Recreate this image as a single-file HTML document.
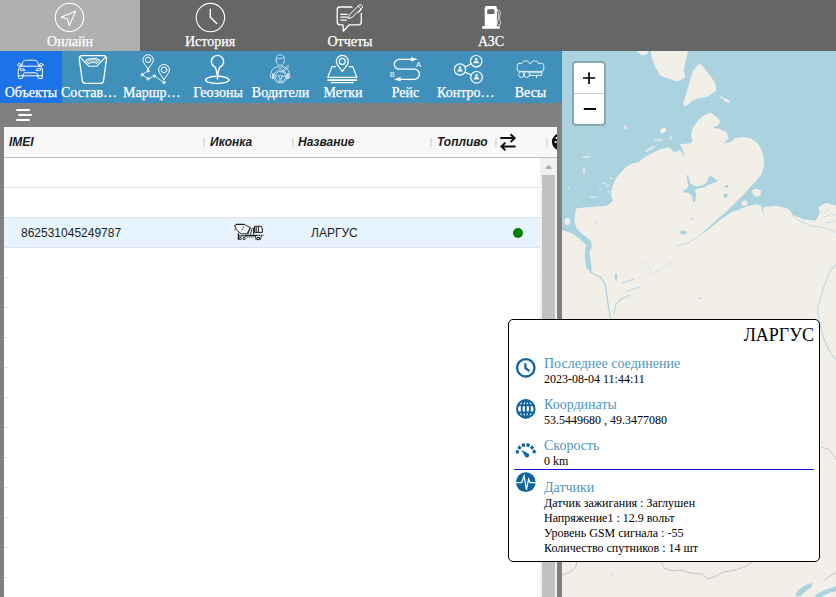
<!DOCTYPE html>
<html><head><meta charset="utf-8">
<style>
*{box-sizing:border-box}
html,body{margin:0;padding:0}
body{width:836px;height:597px;overflow:hidden;position:relative;background:#808080;font-family:"Liberation Serif",serif;}
#top{position:absolute;left:0;top:0;width:836px;height:51px;background:#666666}
.tab{position:absolute;top:0;height:51px;width:140px;-webkit-text-stroke:0.25px #fff;color:#fff;text-align:center;font-size:14px}
.tab.act{background:#b0b0b0}
.tab span{position:absolute;left:0;right:0;top:34px;line-height:16px}
.tab svg{position:absolute;left:50%;top:3px;margin-left:-15px}
#blue{position:absolute;left:0;top:51px;width:562px;height:52px;background:#4090bc}
.it{position:absolute;top:0;height:52px;-webkit-text-stroke:0.25px #fff;color:#fff;font-size:14px;text-align:center;white-space:nowrap}
.it.act{background:#1c73e8}
.it span{position:absolute;left:0;right:0;top:34px;line-height:16px}
.it svg{position:absolute;left:50%;top:3px;margin-left:-16px}
#strip{position:absolute;left:0;top:103px;width:562px;height:24px;background:#808080}
#grid{position:absolute;left:4px;top:127px;width:553px;height:470px;background:#fff;font-family:"Liberation Sans",sans-serif}
#ghead{position:absolute;left:0;top:0;width:553px;height:31px;background:#f8f8f8;border-bottom:1px solid #babfc7}
.h{position:absolute;top:0;line-height:30px;font-size:12px;font-weight:bold;font-style:italic;color:#181d1f}
.sep{position:absolute;top:11px;width:2px;height:9px;background:#dde0ea}
.row{position:absolute;left:0;width:536px;height:30px;border-bottom:1px solid #dde2eb}
.row.sel{background:#e8f4fd}
.c{position:absolute;top:1px;line-height:29px;font-size:12px;color:#181d1f}
#sb{position:absolute;left:536px;top:31px;width:17px;height:439px;background:#f1f1f1}
#sbt{position:absolute;left:2px;top:17px;width:13px;height:422px;background:#c1c1c1}
#split{position:absolute;left:557px;top:102px;width:5px;height:495px;background:#808080}
#map{position:absolute;left:562px;top:51px;width:274px;height:546px;background:#aad3df;overflow:hidden}
#zoom{position:absolute;left:572px;top:61px;width:34px;height:65px;border:2px solid rgba(0,0,0,0.2);border-radius:4px;background:#fff;background-clip:padding-box}
#zoom svg{position:absolute;left:0;top:0}
#pop{position:absolute;left:508px;top:319px;width:312px;height:243px;background:#fff;border:1px solid #000;border-radius:5px;color:#000}
#pop .ttl{position:absolute;right:5px;top:5px;font-size:18px;line-height:21px}
#pop .lb{position:absolute;left:35px;font-size:14px;color:#5096bf;line-height:16px}
#pop .v{position:absolute;left:35px;font-size:12px;line-height:15px}
#pop .ln{position:absolute;left:5px;top:149px;width:300px;height:1px;background:#1212e6}
#pop svg{position:absolute;left:0;top:0}
</style></head><body>
<div id="top">
 <div class="tab act" style="left:0"><span>Онлайн</span></div>
 <div class="tab" style="left:140px"><span>История</span></div>
 <div class="tab" style="left:280px"><span>Отчеты</span></div>
 <div class="tab" style="left:421px"><span>АЗС</span></div>
</div>
<div id="blue">
 <div class="it act" style="left:0;width:62px"><span>Объекты</span></div>
 <div class="it" style="left:62px;width:62px"><span style="text-align:left;left:-1px">Состав…</span></div>
 <div class="it" style="left:124px;width:63px"><span style="text-align:left;left:-1px">Маршр…</span></div>
 <div class="it" style="left:187px;width:62px"><span>Геозоны</span></div>
 <div class="it" style="left:249px;width:63px"><span>Водители</span></div>
 <div class="it" style="left:312px;width:62px"><span>Метки</span></div>
 <div class="it" style="left:374px;width:63px"><span>Рейс</span></div>
 <div class="it" style="left:437px;width:62px"><span style="text-align:left;left:0px">Контро…</span></div>
 <div class="it" style="left:499px;width:63px"><span>Весы</span></div>
</div>
<div id="strip"></div>

<svg id="ico" width="836" height="130" viewBox="0 0 836 130" style="position:absolute;left:0;top:0" fill="none" stroke="#fff" stroke-width="1.1" stroke-linecap="round" stroke-linejoin="round">
<!-- online -->
<circle cx="69.5" cy="17.4" r="14.2"/>
<path d="M75.7 11.1 L61.2 17.2 L67.6 19 L69.3 25.8 Z"/>
<!-- history -->
<circle cx="210.4" cy="17.6" r="14.2"/>
<path d="M210.3 9.3 V17.2 L216.7 23.5" stroke-width="1.4"/>
<!-- reports -->
<path d="M352 7 H340 a2.8 2.8 0 0 0 -2.8 2.8 V22 a2.8 2.8 0 0 0 2.8 2.8 H343 L343.3 31.2 L349.2 24.8 H358.5 a2.8 2.8 0 0 0 2.8 -2.8 V13.5" stroke-width="1.3"/>
<path d="M340.8 14.4 H347.3 M340.8 17.2 H347.3 M340.8 20.1 H346.3" stroke-width="1.3"/>
<path d="M348.4 18.3 L349.6 14.6 L360.2 4.2 L363 6.9 L352.2 17.2 Z M358.3 6.1 L361 8.8 M361.5 9.5 L358.5 12.6" stroke-width="1"/>
<!-- azs -->
<path d="M484.7 26.2 V8.1 a2 2 0 0 1 2 -2 H494.9 a2 2 0 0 1 2 2 V26.2 Z M482.2 26.2 H499.8 V28.7 H482.2 Z" fill="#fff" stroke="none"/>
<rect x="487.2" y="9.3" width="7.2" height="4.7" rx="0.8" fill="#666" stroke="none"/>
<path d="M497 10 C499.5 9.5 500.5 11.5 500.3 13.5 C500 16 499.2 17 499.5 19 C500 21 501 22 500.5 24 C500 25.5 498 25.5 497.6 23.5 C497.3 21 498.6 19 498.6 16 C498.6 13.5 498.2 11.5 497 10 Z" stroke-width="0.7"/>
<!-- car -->
<g stroke-width="1">
<path d="M21.6 66.2 L22.6 62.6 C23.2 60.6 24.5 60.2 30.3 60.2 C36.1 60.2 37.4 60.6 38 62.6 L39 66.2"/>
<path d="M21 66.2 H39.6"/>
<ellipse cx="19.4" cy="64.8" rx="1.7" ry="1.3"/><ellipse cx="41.3" cy="64.8" rx="1.7" ry="1.3"/>
<path d="M21 66.2 C19 66.8 18.3 68 18.3 70 V77.2 a1.4 1.4 0 0 0 1.4 1.4 H21.4 a1.4 1.4 0 0 0 1.4 -1.4 V76 M39.6 66.2 C41.6 66.8 42.4 68 42.4 70 V77.2 a1.4 1.4 0 0 1 -1.4 1.4 H39.3 a1.4 1.4 0 0 1 -1.4 -1.4 V76"/>
<path d="M18.5 75.8 H42.2"/>
<path d="M22.8 76 L23.6 73.6 C23.8 73 24.2 72.8 25 72.8 H35.7 C36.5 72.8 36.9 73 37.1 73.6 L37.9 76"/>
<path d="M20.4 68.5 C22 68.3 24 68.8 25 70.3 C23.5 70.8 21.5 70.8 20.4 70.3 Z M40.3 68.5 C38.7 68.3 36.7 68.8 35.7 70.3 C37.2 70.8 39.2 70.8 40.3 70.3 Z"/>
</g>
<!-- scales -->
<g stroke-width="1.3">
<path d="M82 55.6 H103.8 a2.7 2.7 0 0 1 2.7 3 L103.6 80.5 a3 3 0 0 1 -3 2.8 H85.3 a3 3 0 0 1 -3 -2.8 L79.2 58.6 a2.7 2.7 0 0 1 2.8 -3 Z"/>
<path d="M80 57 L88.7 66.2 H96.9 L105.6 57" stroke-width="1.1"/>
<path d="M85.7 60.4 C88 57.6 98 57.6 100 60.4 L97 63.4 C95.5 62.2 90.5 62.2 89 63.4 Z" stroke-width="1" fill="rgba(255,255,255,0.3)"/><path d="M88.6 59.6 L89.2 60.8 M90.8 58.9 L91.1 60.2 M92.9 58.6 V59.9 M95 58.9 L94.7 60.2 M97.2 59.6 L96.6 60.8" stroke-width="0.7"/>
</g>
<!-- route -->
<g stroke-width="1">
<path d="M148.1 69.3 C146 65.5 142.9 63 142.9 59.9 a5.2 5.2 0 0 1 10.4 0 C153.3 63 150.2 65.5 148.1 69.3 Z"/>
<circle cx="148.1" cy="59.9" r="2.7"/>
<path d="M164 79.6 C161.8 75.6 158.6 73 158.6 69.9 a5.4 5.4 0 0 1 10.8 0 C169.4 73 166.2 75.6 164 79.6 Z"/>
<circle cx="164" cy="69.9" r="2.8"/>
<path d="M148.1 71 L142.2 74.7 L148.1 78.8 L154.4 75.9 L164 82.5" stroke-width="0.8"/>
<circle cx="148.1" cy="71" r="1.1"/><circle cx="142.2" cy="74.7" r="1.2"/><circle cx="148.1" cy="78.8" r="1.2"/><circle cx="154.4" cy="75.9" r="1.2"/><circle cx="164" cy="82.5" r="1.2"/>
</g>
<!-- geozone -->
<g stroke-width="1.4">
<path d="M217.5 79 C217.2 73 216.8 69.5 215 67.2 a6.2 6.2 0 1 1 5 0 C218.2 69.5 217.8 73 217.5 79 Z"/>
<ellipse cx="217.3" cy="79.9" rx="11.7" ry="3.6"/>
</g>
<!-- driver -->
<g stroke-width="0.7" opacity="0.92">
<path d="M276.2 60.5 C275.6 56.5 277.5 54.8 280.2 54.8 C283 54.8 284.8 56.5 284.3 60.5 C284.2 62.5 283.3 64.5 281.8 65.2 H278.6 C277.2 64.5 276.3 62.5 276.2 60.5 Z"/>
<path d="M276.6 58.4 C278.5 59.4 282 59 283.8 57.4"/>
<path d="M278.6 65.2 L278.4 66.6 C275 67.5 272.6 68.3 271.8 70.5 L270.3 76 C270.2 77.5 271.5 78.5 273 78.3 M281.8 65.2 L282 66.6 C285.4 67.5 287.8 68.3 288.6 70.5 L290.1 76 C290.2 77.5 288.9 78.5 287.4 78.3"/>
<path d="M278.4 66.6 L280.2 69 L282 66.6"/>
<path d="M288.2 65.2 L281 72.2 M289 66.5 L282.2 73"/>
<circle cx="280.5" cy="76.6" r="6.6"/>
<circle cx="280.5" cy="76.6" r="5.2"/>
<circle cx="280.5" cy="76.7" r="1.7"/>
<path d="M275.3 76 H278.8 M282.2 76 H285.7 M279.8 78.3 V81.6 M281.2 78.3 V81.6"/>
<path d="M273 74 v4 M288 74 v4" stroke-width="1.6"/>
</g>
<!-- marks -->
<g stroke-width="1.2">
<path d="M342.3 71.6 C340 67.3 336.3 65 336.3 61.4 a6 6 0 0 1 12 0 C348.3 65 344.6 67.3 342.3 71.6 Z"/>
<circle cx="342.3" cy="61.4" r="3"/>
<path d="M335.7 66.6 H332 L327.8 77.3 H356.8 L352.7 66.6 H349.1"/>
<path d="M328 80.1 H356.5" stroke-width="1.7"/>
<path d="M331 82.6 H353.3" stroke-width="1.2"/>
</g>
<!-- reis -->
<g stroke-width="1.3">
<path d="M413 59.3 H399.2 a4.95 4.95 0 0 0 0 9.9 H414.4 a5.05 5.05 0 0 1 0 10.1 H398"/>
<path d="M411 57 L417.6 59.3 L411 61.6 Z M400.6 77 L394 79.3 L400.6 81.6 Z" fill="#fff" stroke="none"/>
</g>
<text x="416" y="67.3" font-family="Liberation Sans, sans-serif" font-size="7.6" fill="#fff" stroke="none">A</text>
<text x="389.8" y="76.7" font-family="Liberation Sans, sans-serif" font-size="7.6" fill="#fff" stroke="none">B</text>
<!-- control -->
<g stroke-width="1.2">
<circle cx="460" cy="69.5" r="5.6"/><circle cx="476.2" cy="61.2" r="5.7"/><circle cx="476.5" cy="77.3" r="5.8"/>
<path d="M465.2 67 L471.2 63.8 M465.2 72.2 L471.4 75"/>
<g fill="#fff" stroke="none">
<circle cx="460" cy="67.6" r="1.3"/><path d="M457.2 71.6 L458.3 69.3 H461.7 L462.8 71.6 Z"/>
<circle cx="476.2" cy="59.3" r="1.3"/><path d="M473.4 63.3 L474.5 61 H477.9 L479 63.3 Z"/>
<circle cx="476.5" cy="75.4" r="1.3"/><path d="M473.7 79.4 L474.8 77.1 H478.2 L479.3 79.4 Z"/>
</g></g>
<!-- vesy tanker -->
<g stroke-width="0.9" opacity="0.95">
<path d="M519.5 63.3 H522.3 C522.9 61.6 523.5 61 524.8 61 H526.8 C528.1 61 528.7 61.6 529.3 63.3 H531.2 C531.8 61.6 532.4 61 533.7 61 H535.7 C537 61 537.6 61.6 538.2 63.3 H541.5 a2.3 2.3 0 0 1 2.3 2.3 V69.1 a2.3 2.3 0 0 1 -2.3 2.3 H519.5 a2.3 2.3 0 0 1 -2.3 -2.3 V65.6 a2.3 2.3 0 0 1 2.3 -2.3 Z"/>
<circle cx="521.4" cy="74.6" r="2.9"/><circle cx="526.8" cy="74.6" r="2.9"/>
<path d="M529.8 72.8 H541.8 V75.5 H529.8 M536.5 75.5 V77.6 M541.8 71.4 V72.8"/>
</g>
<!-- hamburger -->
<path d="M16.3 110 H29.8 M18.3 115 H31.8 M16.3 120 H29.8" stroke-width="1.8" stroke-linecap="butt"/>
</svg>
<div id="grid">
 <div id="ghead">
  <div class="h" style="left:5px">IMEI</div>
  <div class="sep" style="left:199px"></div><div class="h" style="left:206px">Иконка</div>
  <div class="sep" style="left:288px"></div><div class="h" style="left:294px">Название</div>
  <div class="sep" style="left:426px"></div><div class="h" style="left:433px">Топливо</div>
  <div class="sep" style="left:491px"></div>
  <div class="sep" style="left:542px"></div>
 </div>
 <div class="row" style="top:31px"></div>
 <div class="row" style="top:61px"></div>
 <div class="row sel" style="top:91px">
  <div class="c" style="left:17px">862531045249787</div>
  <div class="c" style="left:307px">ЛАРГУС</div>
 </div>

 <div style="position:absolute;left:0;top:150px;width:3px;height:1px;background:#d5dae6"></div><div style="position:absolute;left:0;top:180px;width:3px;height:1px;background:#d5dae6"></div><div style="position:absolute;left:0;top:210px;width:3px;height:1px;background:#d5dae6"></div><div style="position:absolute;left:0;top:240px;width:3px;height:1px;background:#d5dae6"></div><div style="position:absolute;left:0;top:270px;width:3px;height:1px;background:#d5dae6"></div><div style="position:absolute;left:0;top:300px;width:3px;height:1px;background:#d5dae6"></div><div style="position:absolute;left:0;top:330px;width:3px;height:1px;background:#d5dae6"></div><div style="position:absolute;left:0;top:360px;width:3px;height:1px;background:#d5dae6"></div><div style="position:absolute;left:0;top:390px;width:3px;height:1px;background:#d5dae6"></div><div style="position:absolute;left:0;top:420px;width:3px;height:1px;background:#d5dae6"></div><div style="position:absolute;left:0;top:450px;width:3px;height:1px;background:#d5dae6"></div><div style="position:absolute;left:535px;top:150px;width:1px;height:1px;background:#d5dae6"></div><div style="position:absolute;left:535px;top:180px;width:1px;height:1px;background:#d5dae6"></div><div style="position:absolute;left:535px;top:210px;width:1px;height:1px;background:#d5dae6"></div><div style="position:absolute;left:535px;top:240px;width:1px;height:1px;background:#d5dae6"></div><div style="position:absolute;left:535px;top:270px;width:1px;height:1px;background:#d5dae6"></div><div style="position:absolute;left:535px;top:300px;width:1px;height:1px;background:#d5dae6"></div><div style="position:absolute;left:535px;top:330px;width:1px;height:1px;background:#d5dae6"></div><div style="position:absolute;left:535px;top:360px;width:1px;height:1px;background:#d5dae6"></div><div style="position:absolute;left:535px;top:390px;width:1px;height:1px;background:#d5dae6"></div><div style="position:absolute;left:535px;top:420px;width:1px;height:1px;background:#d5dae6"></div><div style="position:absolute;left:535px;top:450px;width:1px;height:1px;background:#d5dae6"></div>
 <div id="sb"><div id="sbt"></div></div>
 <svg width="553" height="470" viewBox="4 127 553 470" style="position:absolute;left:0;top:0;overflow:hidden">
  <g fill="none" stroke="#111" stroke-width="2" stroke-linecap="butt" stroke-linejoin="miter">
   <path d="M500.3 138.1 H515 M510.6 134.2 L514.6 138.1 L510.6 142"/>
   <path d="M515.6 146.5 H501 M505.4 142.6 L501.4 146.5 L505.4 150.4"/>
  </g>
  <circle cx="560.5" cy="141.8" r="8.6" fill="#111"/>
  <ellipse cx="556.5" cy="138" rx="0.9" ry="1" fill="#fff"/><ellipse cx="555.7" cy="142.1" rx="1.1" ry="1.1" fill="#fff"/>
  <path d="M545 168.8 L548.6 165 L552.2 168.8 Z" fill="#a3a3a3"/>
  <circle cx="518" cy="233" r="5" fill="#008000"/>
  <g fill="none" stroke="#1a1a1a" stroke-width="1" stroke-linejoin="round" stroke-linecap="butt">
   <path d="M234.8 225.8 L236.3 224.4 H244.2 L250.2 227.6 L247 233.8 H241 L236.2 229.6 L235.6 227.4 Z" fill="#f3f6f9" stroke-width="0.9"/>
   <path d="M235.9 224.4 H244.4" stroke-width="1.1"/>
   <path d="M234.4 225 L235.6 227.2 L234.6 230.4" stroke-dasharray="1.2 1" opacity="0.8"/>
   <path d="M243.6 226.6 L241.6 231.2" stroke-dasharray="1.3 1"/>
   <path d="M250.4 227.6 L247.8 234.4 M252.2 228.2 L250.4 234.6" stroke-width="0.9"/>
   <path d="M253.5 227.6 V234.8" stroke-width="0.9"/>
   <path d="M238.4 233.2 V239.8" stroke-width="1.3"/>
   <path d="M238.6 235.9 H246" stroke-width="1.1"/>
   <path d="M245 235.6 H256" stroke-width="1.6"/>
   <path d="M256 235.4 H263.6" stroke-dasharray="1.6 0.8" stroke-width="1.1"/>
   <circle cx="240.3" cy="238.6" r="1.1"/><circle cx="244.2" cy="238.6" r="1.1"/>
   <path d="M246.5 237.7 H254" stroke-dasharray="1 1.4" opacity="0.8"/>
   <path d="M254.6 226.3 H261.4 L262.3 229 V232.4 H254.6 Z" fill="#eef2f6" stroke-width="1"/>
   <path d="M256.2 227 V232 M258.4 227 V232" stroke-width="1"/>
   <path d="M254.4 235.8 C255.6 236.6 256 238 255.8 239.6 M260.6 239.6 C260.6 237.6 260.8 236.6 262 235.8" stroke-width="1"/>
   <circle cx="258.2" cy="238.5" r="1.3" stroke-width="1.1"/>
  </g>
 </svg>
</div>
<div id="split"></div>
<div id="map"><svg width="274" height="546" viewBox="562 51 274 546" style="position:absolute;left:0;top:0">
<rect x="562" y="51" width="274" height="546" fill="#aad3df"/>
<g fill="#f2efe9">
<!-- Severnaya Zemlya -->
<path d="M650.5 51 L652 58 L655.4 67.4 L660.4 75.6 L665 77.5 L670.2 78.9 L676.8 81.6 L681 80 L685 77.2 L684.2 72 L684 67.4 L685.5 62 L686.6 57.6 L688.2 51 Z"/>
<path d="M637 51 L648.5 51 L647 54.5 L641 55 Z"/>
<path d="M699.7 63.5 L696 67 L693.1 70.7 L690.5 79 L688.2 87.1 L685.5 96 L683.3 103.5 L684.5 106.3 L688.3 104.5 L693.1 100.2 L699 98.2 L706.3 96.9 L711.5 94.2 L716.1 90.3 L715.8 86 L714.5 82.1 L710.5 76 L706.3 70.7 L702.5 66 Z"/>
<ellipse cx="726.3" cy="100.5" rx="3.6" ry="1.5" transform="rotate(25 726.3 100.5)"/>
<ellipse cx="721.5" cy="97.5" rx="1.5" ry="1"/>
<ellipse cx="663.3" cy="130.4" rx="3.2" ry="2.2" transform="rotate(-35 663.3 130.4)"/>
<ellipse cx="658" cy="140" rx="5" ry="1.2" transform="rotate(-10 658 140)" opacity="0.6"/>
<ellipse cx="670.5" cy="138" rx="1.3" ry="2.6" opacity="0.6"/>
<ellipse cx="625.5" cy="127" rx="1.6" ry="2.6" opacity="0.7"/>
<ellipse cx="586" cy="157" rx="4" ry="1.2" opacity="0.6"/>
<ellipse cx="584" cy="170.5" rx="1.3" ry="3.2" opacity="0.7"/>
<ellipse cx="593" cy="197" rx="4" ry="1" opacity="0.6"/>
<ellipse cx="603.5" cy="183.3" rx="1.6" ry="1" opacity="0.7"/><ellipse cx="607.5" cy="185.5" rx="2" ry="1.5" opacity="0.6"/><ellipse cx="608.5" cy="191.5" rx="1.6" ry="1.6" opacity="0.6"/><ellipse cx="600" cy="189" rx="1.4" ry="1" opacity="0.6"/><ellipse cx="611" cy="178" rx="2" ry="1" opacity="0.6"/><ellipse cx="569" cy="187.5" rx="1" ry="1" opacity="0.7"/>
<ellipse cx="650" cy="149" rx="6" ry="1.3" transform="rotate(-25 650 149)" opacity="0.7"/>
<!-- mainland -->
<path d="M562 597 L562 230.5 L567 231.5 L571.6 233.5 L576 236 L580.4 239.3 L586.3 245.2 L585.2 250 L584.8 255.4 L585.5 262 L586.3 267.2 L590.7 273
 L591.6 268 L590.7 261.3 L589.2 252.5 L592.1 246.7 L590.7 240.8 L587 237.5 L583.4 234.9 L579 231 L576 227.6 L574.6 222 L574.6 217.4 L576 208.6 L584 207.6 L592.1 207.1 L606.8 205.7 L612.7 201.3 L611.5 196 L611.2 191 L614.1 182.2 L616.5 177.5 L620 173.4 L623.5 169.5 L627.3 166.1
 L633 163.6 L638 162.3 L646.1 156.3 L652.1 153.3 L660.2 149.3 L668.2 147.3 L671.5 149.8 L674.2 152.3 L680.3 150.3 L682.2 153 L683.4 157.5 L683.6 152 L682.7 149.3 L679.8 144.2 L685 143.8 L690.3 143.2 L692.3 141.6 L691.3 135.2 L691.8 131 L693.3 127.2 L698.3 120.1 L704.4 115.1 L710.4 112.7 L715.4 116.1 L720.5 121.1 L718.4 125.2 L712.4 127.2 L720.5 129.2 L726.5 132.2 L728.5 138.2 L723.5 143.2 L730.5 142.2 L734.5 138.2 L742.6 137.2 L750.6 138.2 L757.6 143.2 L760.5 148 L762.7 153.3 L764.3 163.3 L763.3 168.5 L761.7 173.4 L756.6 180.4 L750.6 186.5 L744.6 193.5 L738.5 199.5 L730.5 207.6 L724.5 213.6 L719 217.8 L710 226 L703 232 L704 233 L711 227.3 L722 218.6 L731 212.6 L740 209 L749.2 205.8 L755.2 204.3 L761.2 205.8 L762.7 212.5 L763.6 207.5 L765.7 206.8 L776.3 205.8 L788.4 208.8 L792.9 214.8 L803.4 219.3 L815.5 220.8 L820 213.3 L818.5 207.3 L826 202.8 L836 205.8 L836 597 Z"/>
<ellipse cx="567.3" cy="221.4" rx="2.7" ry="3.6"/>
<path d="M752.2 190.2 L757 188.6 L761.2 191 L760.2 195.8 L756 197 L752.5 194 Z"/>
<path d="M741.2 202 L745.5 200.2 L748 202.6 L746 205.8 L742 205.5 Z"/>
</g>
<g fill="#aad3df">
<!-- lake Taymyr -->
<path d="M686.6 175.2 L688.2 175.2 L690.6 184 L696.5 186.6 L703 185 L706.8 182.6 L708.5 177.5 L710.4 175.2 L713 177.5 L718 181 L713.5 183 L709 184.2 L704.4 187.3 L697 188.8 L694.8 190.2 L696 194 L695.3 201.8 L693 202 L692 196 L688.5 192.5 L684.5 193 L683 190.5 L687.3 188.4 L688.3 186 Z"/>
<circle cx="726.5" cy="186.5" r="1.8"/><circle cx="725.5" cy="195.5" r="2.3"/>
<ellipse cx="683.5" cy="232.5" rx="3.2" ry="2"/>
<ellipse cx="616" cy="277" rx="1.2" ry="4"/>
<circle cx="595.5" cy="222.5" r="1.1"/><circle cx="692" cy="219" r="1"/><circle cx="700" cy="298" r="0.9"/>
<circle cx="611.5" cy="574.5" r="1"/>
<path d="M795.5 594.5 L798.5 590 L803 586.8 L808 584 L812.5 583 L811.5 587 L807.5 589.8 L803.5 593.2 L799.5 596.5 L796 596.5 Z"/>
<path d="M814 597 L818.5 593 L825 590 L831 588 L836 586 L836 591.5 L830 592.5 L824.5 595 L821.5 597 Z"/>
</g>
<g fill="none" stroke="#aad3df" stroke-linecap="round" stroke-linejoin="round">
<path d="M590.7 272 L595 275 L600.9 277.4 L605.3 284.7 L606.8 296.5 L609.7 314 L610.5 319" stroke-width="1.3"/>
<path d="M590 244 L588.3 252 L588.5 262 L590.5 271" stroke-width="2.4" opacity="0.85"/>
<path d="M836 265.2 L831 269 L827 278.6 L823 289 L820 300 L817.5 308 L819 319 L821.6 332 L825.6 343 L831 353.7 L836 359" stroke-width="1.1" opacity="0.8"/>
<path d="M703 232.5 L696 238 L688 243 L678 246" stroke-width="0.9" opacity="0.8"/>
<path d="M613.5 315 L616 304 L622 298 M618 301 L630 295 M622 283 L634 279 M627 291 L640 287" stroke-width="1.1" opacity="0.85"/>
<path d="M762.7 212 L764.5 217 M792 215 L800 221 L812 226 L826 228 L836 233" stroke-width="0.9" opacity="0.7"/>
<path d="M824 213 L830 208 M822 218 L832 214 L836 215 M826 223 L836 221" stroke-width="0.9" opacity="0.6"/>
<path d="M640 261 L648 265 L652 273 L660 270 L672 262" stroke-width="0.8" opacity="0.5"/>
</g>
<g fill="none" stroke="#c9b2cf" stroke-width="0.9" opacity="0.9">
<path d="M562 575 L570 572 L576 567 L577 561"/>
<path d="M661 561 L664 568 L672 571 L682 570 L690 573 L702 574 L708 579 L716 576 L724 572 L736 570 L746 566 L753 561"/>
<path d="M821 447 L828 449 L833 454.5 L836 460 M824 580.5 L830 576 L836 572.5"/>
</g>
</svg></div>
<div id="zoom"><svg width="30" height="61" viewBox="574 63 30 61"><path d="M574 93.5 H604" stroke="#ccc" stroke-width="1"/><path d="M583 78 H595.2 M589 72.2 V84" stroke="#000" stroke-width="1.7"/><path d="M583.8 109 H596" stroke="#000" stroke-width="1.9"/></svg></div>
<div id="pop">

 <svg width="60" height="240" viewBox="509 320 60 240">
  <g fill="none" stroke="#0f659f">
   <circle cx="525.8" cy="367.8" r="8.7" stroke-width="2.3"/>
   <path d="M525.4 363.2 V368.2 L529.4 371" stroke-width="2.2" stroke-linecap="butt"/>
  </g>
  <circle cx="525.8" cy="408.9" r="9.8" fill="#0f659f"/>
  <circle cx="525.8" cy="408.9" r="7.7" fill="#fff"/>
  <g fill="none" stroke="#0f659f" stroke-width="1.9">
   <ellipse cx="525.8" cy="408.9" rx="4.1" ry="8.6"/>
   <path d="M525.8 400 V418 M518 405.3 H533.6 M518 412.5 H533.6"/>
  </g>
  <g fill="none" stroke="#0f659f" stroke-width="3.2" stroke-dasharray="3.1 1.55">
   <path d="M517.3 453.4 A8.5 8.5 0 0 1 534.3 453.4" stroke-dashoffset="0"/>
  </g>
  <path d="M521.4 450 L527.4 453 A2.3 2.3 0 1 1 524.6 455.6 Z" fill="#0f659f"/>
  <circle cx="525.8" cy="482.2" r="9.9" fill="#0f659f"/>
  <path d="M515.9 482.6 H521.6 L524.1 476 L526.4 489.6 L528.6 479.2 L530 482.6 H535.7" fill="none" stroke="#fff" stroke-width="1.25" stroke-linejoin="miter"/>
 </svg>
 <div class="ttl">ЛАРГУС</div>
 <div class="lb" style="top:36px">Последнее соединение</div>
 <div class="v" style="top:52px">2023-08-04 11:44:11</div>
 <div class="lb" style="top:77px">Координаты</div>
 <div class="v" style="top:93px">53.5449680 , 49.3477080</div>
 <div class="lb" style="top:118px">Скорость</div>
 <div class="v" style="top:134px">0 km</div>
 <div class="ln"></div>
 <div class="lb" style="top:160px">Датчики</div>
 <div class="v" style="top:176px">Датчик зажигания : Заглушен</div>
 <div class="v" style="top:191px">Напряжение1 : 12.9 вольт</div>
 <div class="v" style="top:206px">Уровень GSM сигнала : -55</div>
 <div class="v" style="top:221px">Количество спутников : 14 шт</div>
</div>
</body></html>
